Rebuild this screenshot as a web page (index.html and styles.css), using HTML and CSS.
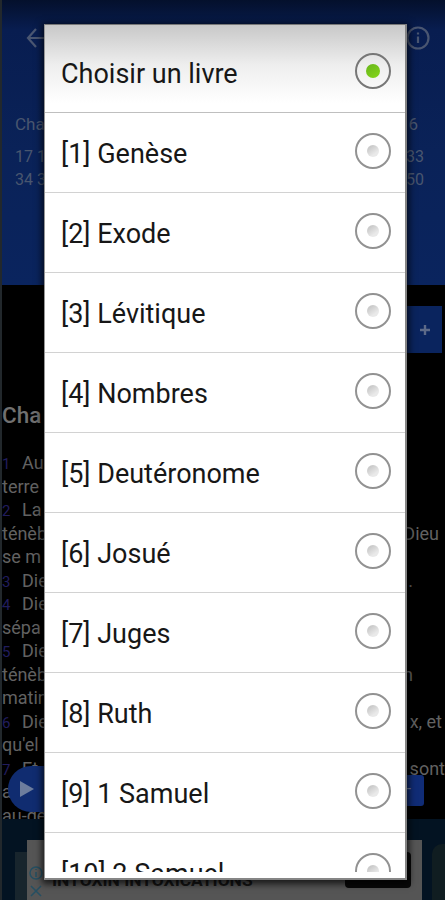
FILE: index.html
```
<!DOCTYPE html>
<html lang="fr">
<head>
<meta charset="utf-8">
<title>Choisir un livre</title>
<link rel="stylesheet" href="styles.css">
</head>
<body>
<div class="app">
  <header class="top">
    <div class="toolbar">
      <svg class="back" width="22" height="22" viewBox="0 0 22 22"><path d="M10 2L2 11L10 20M2 11H21"/></svg>
      <svg class="info" width="24" height="24" viewBox="0 0 24 24"><circle cx="12" cy="12" r="10.5"/><path d="M12 10.500V17M12 6.500V8.500"/></svg>
    </div>
    <div class="chapters">
      <div class="chapter-title"><span>Cha</span><span>6</span></div>
      <div><span>17 1</span><span>33</span></div>
      <div><span>34 3</span><span>50</span></div>
    </div>
  </header>
  <div class="add"><svg width="12" height="12" viewBox="0 0 12 12"><path d="M6 1V11M1 6H11"/></svg></div>
  <h2>Cha</h2>
  <main class="verses">
    <div><span><i>1</i>Au</span></div>
    <div><span>terre</span></div>
    <div><span><i>2</i>La</span></div>
    <div><span>ténèb</span><span class="r6">Dieu</span></div>
    <div><span>se m</span></div>
    <div><span><i>3</i>Die</span><span class="r33">.</span></div>
    <div><span><i>4</i>Die</span></div>
    <div><span>sépa</span></div>
    <div><span><i>5</i>Die</span></div>
    <div><span>ténèb</span><span class="r33">n</span></div>
    <div><span>matin</span></div>
    <div><span><i>6</i>Die</span><span class="r3">x, et</span></div>
    <div><span>qu'el</span></div>
    <div><span><i>7</i>Et</span><span>sont</span></div>
    <div><span>a</span></div>
    <div><span>au-de</span></div>
  </main>
  <div class="play"><svg width="16" height="18" viewBox="0 0 16 18"><path d="M1 1L15 9L1 17Z"/></svg></div>
  <div class="next">-</div>
  <footer class="ads">
    <div class="ad">
      <svg class="adicons" width="14" height="34" viewBox="0 0 14 34"><circle cx="7" cy="8" r="6"/><path d="M7 7V12M7 4V5M2 21L12 31M12 21L2 31"/></svg>
      <span class="adtext">INTOXIN INTOXICATIONS</span>
      <div class="adbutton"></div>
    </div>
    <div class="side"></div>
  </footer>
</div>
<section class="dialog">
  <div class="list">
    <div class="row first"><span>Choisir un livre</span><b class="radio on"></b></div>
    <div class="row"><span>[1] Genèse</span><b class="radio"></b></div>
    <div class="row"><span>[2] Exode</span><b class="radio"></b></div>
    <div class="row"><span>[3] Lévitique</span><b class="radio"></b></div>
    <div class="row"><span>[4] Nombres</span><b class="radio"></b></div>
    <div class="row"><span>[5] Deutéronome</span><b class="radio"></b></div>
    <div class="row"><span>[6] Josué</span><b class="radio"></b></div>
    <div class="row"><span>[7] Juges</span><b class="radio"></b></div>
    <div class="row"><span>[8] Ruth</span><b class="radio"></b></div>
    <div class="row"><span>[9] 1 Samuel</span><b class="radio"></b></div>
    <div class="row"><span>[10] 2 Samuel</span><b class="radio"></b></div>
  </div>
</section>
</body>
</html>
```
FILE: styles.css
```
* { box-sizing: border-box; }
body { margin: 0; width: 445px; height: 900px; overflow: hidden; position: relative; background: #000; font-family: Roboto, sans-serif; }
.app { height: 900px; overflow: hidden; color: #626262; border-left: 2px solid #22282c; position: relative; }
.top { height: 285px; background: linear-gradient(#04102c, #081d50 30px, #0a2258 150px, #0a245e); color: #49566f; }
.toolbar { display: flex; justify-content: space-between; padding: 26px 15px 0 24px; height: 113px; }
.toolbar svg { fill: none; stroke: #4a5671; stroke-width: 2.2; }
.back { margin-top: 1px; }
.chapters { padding: 0 21px 0 13px; font-size: 16px; }
.chapters div { display: flex; justify-content: space-between; height: 23px; line-height: 24px; }
.chapters .chapter-title { height: 32px; padding-right: 6px; font-size: 17px; line-height: 23px; }
.add { width: 56px; height: 47px; margin: 21px 3px 0 auto; background: #0a245e; display: flex; align-items: center; justify-content: flex-end; padding-right: 11px; }
.add path { fill: none; stroke: #5d6a88; stroke-width: 2.4; }
h2 { margin: 48px 0 0; font-size: 22.5px; line-height: 28px; height: 49px; font-weight: 500; color: #707070; }
.verses { font-size: 18px; }
.verses div { height: 23.5px; line-height: 25px; display: flex; justify-content: space-between; white-space: nowrap; }
.verses i { display: inline-block; width: 20px; font-style: normal; font-size: 15px; color: #211d5d; }
.r3 { padding-right: 3px; }
.r6 { padding-right: 6px; }
.r33 { padding-right: 32px; }
.play { position: absolute; left: 6px; top: 766px; width: 60px; height: 46px; border-radius: 23px 0 0 23px; background: #102c70; display: flex; align-items: center; padding-left: 11px; }
.play path { fill: #6d7d9d; }
.next { position: absolute; left: 382px; top: 775px; width: 40px; height: 31px; background: #102c76; color: #73819e; text-align: right; padding: 4px 13px 0 0; border-radius: 3px; }
.ads { position: absolute; left: 0; top: 819px; width: 443px; height: 81px; background: #031322; display: flex; padding-top: 21px; }
.ad { margin-left: 25px; width: 395px; height: 60px; background: #555; position: relative; box-shadow: -12px 12px 0 #18252d; }
.adicons { position: absolute; left: 2px; top: 25px; fill: none; stroke: #254f62; stroke-width: 1.5; }
.adtext { position: absolute; left: 25px; top: 29px; font-size: 17.4px; line-height: 22px; font-weight: 700; color: #161616; white-space: nowrap; }
.adbutton { position: absolute; left: 318px; top: 12px; width: 66px; height: 36px; background: #080808; border-radius: 4px; }
.side { margin: 4px 0 0 10px; width: 13px; height: 60px; border-radius: 10px 0 0 0; background: #101d21; }
.dialog { position: absolute; left: 44px; top: 24px; width: 363px; height: 856px; background: #fff; border: 1px solid #969696; border-top-color: #777; border-right: 2px solid #858585; border-bottom: 2px solid #858585; box-shadow: 0 2px 7px 2px rgba(0,0,0,.72); }
.list { height: 847px; overflow: hidden; }
.row { height: 80px; border-bottom: 1.5px solid #d2d2d2; display: flex; justify-content: space-between; padding: 20px 14px 0 16px; color: #171717; font-size: 27px; line-height: 42px; }
.row.first { height: 88px; padding-top: 28px; background: linear-gradient(#c8c8c8, #eeeeee 40px, #fff 78px); border-bottom-color: #bfbfbf; }
.radio { width: 36px; height: 36px; border: 2px solid #929292; border-radius: 50%; display: flex; align-items: center; justify-content: center; }
.radio::after { content: ""; width: 12px; height: 12px; border-radius: 50%; background: linear-gradient(145deg, #bdbdbd, #e9e9e9 70%); }
.radio.on { border-color: #777; }
.radio.on::after { width: 14px; height: 14px; background: linear-gradient(145deg, #68b51c, #85d719); }
```
